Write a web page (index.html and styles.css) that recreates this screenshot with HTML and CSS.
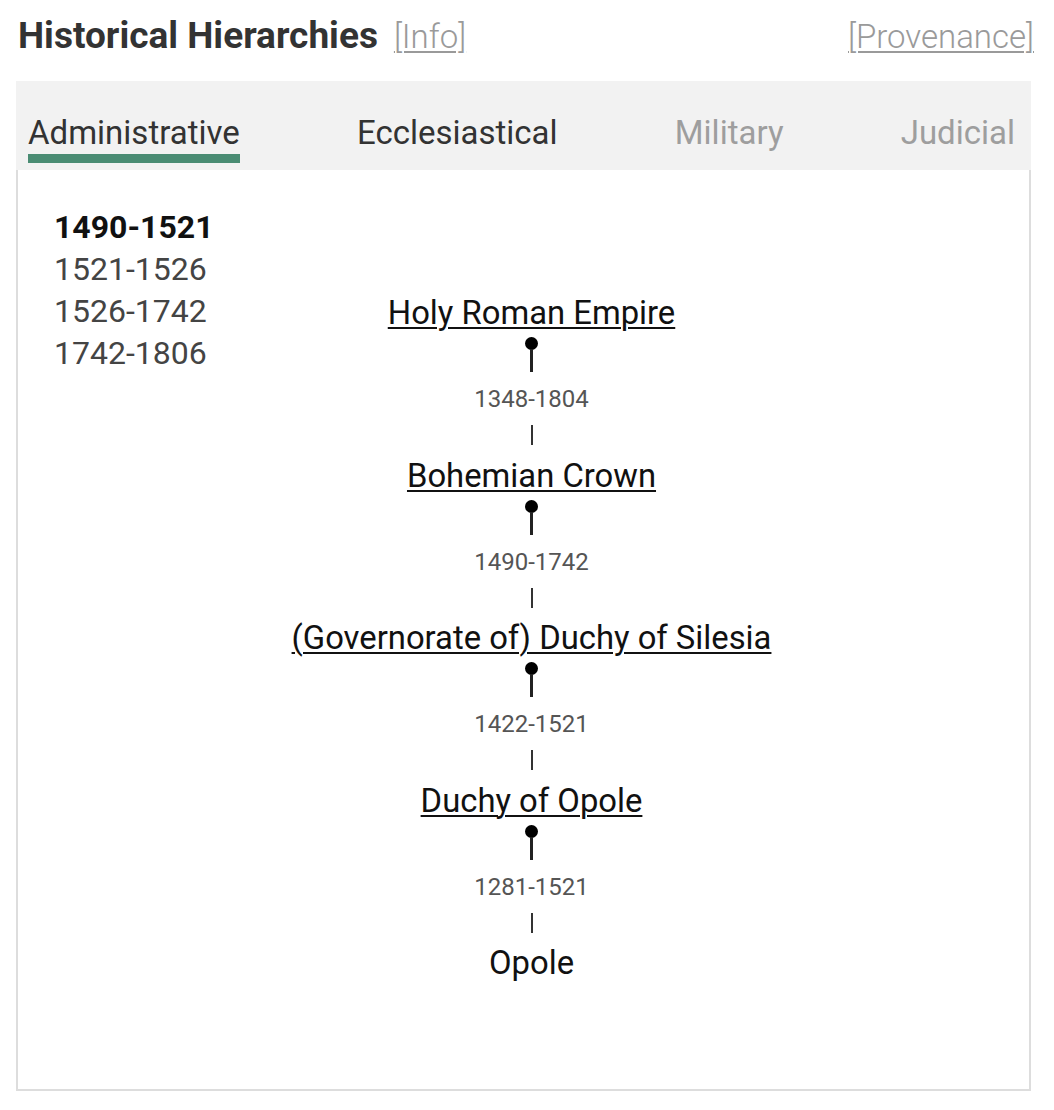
FILE: index.html
```html
<!DOCTYPE html>
<html lang="en">
<head>
<meta charset="utf-8">
<title>Historical Hierarchies</title>
<link rel="stylesheet" href="styles.css">
</head>
<body>
<div class="widget">
  <div class="header">
    <div class="title-group">
      <h2 class="title">Historical Hierarchies</h2>
      <a class="meta-link" href="#">[Info]</a>
    </div>
    <a class="meta-link" href="#">[Provenance]</a>
  </div>
  <div class="tabs">
    <span class="tab active">Administrative</span>
    <span class="tab">Ecclesiastical</span>
    <span class="tab disabled">Military</span>
    <span class="tab disabled">Judicial</span>
  </div>
  <div class="panel">
    <ul class="periods">
      <li class="period current">1490-1521</li>
      <li class="period">1521-1526</li>
      <li class="period">1526-1742</li>
      <li class="period">1742-1806</li>
    </ul>
    <div class="tree">
      <a class="node" href="#">Holy Roman Empire</a>
      <div class="pin"><span class="dot"></span><span class="stem"></span></div>
      <div class="date">1348-1804</div>
      <div class="tick"></div>
      <a class="node" href="#">Bohemian Crown</a>
      <div class="pin"><span class="dot"></span><span class="stem"></span></div>
      <div class="date">1490-1742</div>
      <div class="tick"></div>
      <a class="node" href="#">(Governorate of) Duchy of Silesia</a>
      <div class="pin"><span class="dot"></span><span class="stem"></span></div>
      <div class="date">1422-1521</div>
      <div class="tick"></div>
      <a class="node" href="#">Duchy of Opole</a>
      <div class="pin"><span class="dot"></span><span class="stem"></span></div>
      <div class="date">1281-1521</div>
      <div class="tick"></div>
      <span class="node plain">Opole</span>
    </div>
  </div>
</div>
</body>
</html>
```
FILE: styles.css
```css
* { box-sizing: border-box; }

body {
  margin: 0;
  background: #ffffff;
  font-family: Roboto, "Noto Sans", "Liberation Sans", sans-serif;
  color: #222;
}

.widget {
  margin-left: 16px;
  width: 1015px;
}

.header {
  display: flex;
  justify-content: space-between;
  align-items: baseline;
  padding: 14px 0 0 2px;
  margin-right: -3px;
  height: 81px;
}

.title-group {
  display: flex;
  align-items: baseline;
  gap: 16px;
}

.title {
  margin: 0;
  font-size: 37px;
  line-height: 44px;
  font-weight: 700;
  color: #333;
}

.meta-link {
  font-size: 33px;
  line-height: 44px;
  font-weight: 300;
  color: #9a9a9a;
  text-decoration: underline;
  text-decoration-thickness: 2px;
  text-underline-offset: 3px;
}

.tabs {
  display: flex;
  justify-content: space-between;
  background: #f2f2f2;
  padding: 32px 16px 7px 12px;
}

.tab {
  font-size: 33px;
  line-height: 40px;
  color: #333;
  padding-bottom: 1px;
  border-bottom: 9px solid transparent;
}

.tab.active {
  border-bottom-color: #4a8c73;
}

.tab.disabled {
  color: #9e9e9e;
}

.panel {
  display: grid;
  border: 2px solid #dddddd;
  border-top: none;
  padding: 36px 0 106px;
}

.periods {
  grid-area: 1 / 1;
  align-self: start;
  justify-self: start;
  list-style: none;
  margin: 0;
  padding: 0 0 0 36px;
}

.period {
  font-size: 32px;
  line-height: 42px;
  color: #444;
}

.period.current {
  font-weight: 700;
  color: #111;
}

.tree {
  grid-area: 1 / 1;
  display: flex;
  flex-direction: column;
  align-items: center;
  margin-top: 87px;
  padding-left: 16px;
}

.node {
  font-size: 32.8px;
  line-height: 40px;
  color: #111;
  text-decoration: underline;
  text-decoration-thickness: 2px;
  text-underline-offset: 3px;
  white-space: nowrap;
}

.node.plain {
  text-decoration: none;
}

.pin {
  display: flex;
  flex-direction: column;
  align-items: center;
  margin-top: 4px;
}

.dot {
  width: 13px;
  height: 13px;
  border-radius: 50%;
  background: #000;
}

.stem {
  width: 3px;
  height: 23px;
  margin-top: -1px;
  background: #222;
}

.date {
  margin-top: 12px;
  font-size: 24px;
  line-height: 30px;
  color: #555;
}

.tick {
  width: 2px;
  height: 20px;
  margin: 11px 0 10.5px;
  background: #333;
}
```
